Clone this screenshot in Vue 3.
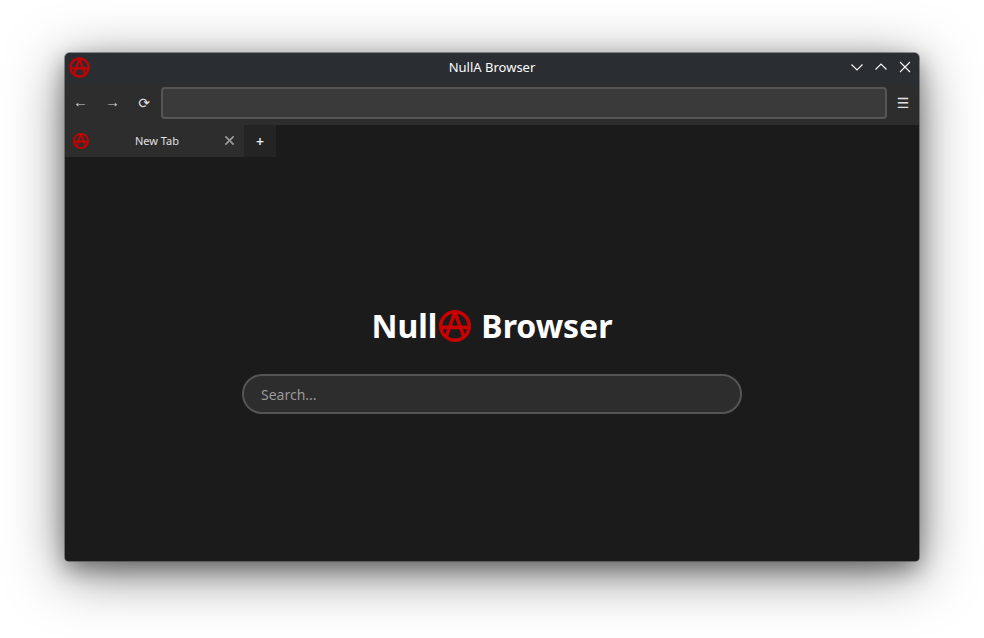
<script setup>
const circle = 'M12 2.5a9.5 9.5 0 1 0 0 19a9.5 9.5 0 0 0 0-19Z';
const letter = 'M12 2.8 5.8 20M12 2.8 18.2 20M2.8 12.9h18.4';
</script>

<template>
  <div class="desktop">
    <div class="window">
      <header class="titlebar">
        <svg class="logo title-logo" viewBox="0 0 24 24" aria-hidden="true">
          <path :d="circle" />
          <path :d="letter" />
        </svg>
        <span class="title">NullA Browser</span>
        <div class="win-controls">
          <svg viewBox="0 0 14 14" aria-hidden="true"><path d="M1.5 4.5 7 10l5.5-5.5" /></svg>
          <svg viewBox="0 0 14 14" aria-hidden="true"><path d="M1.5 9.5 7 4l5.5 5.5" /></svg>
          <svg viewBox="0 0 14 14" aria-hidden="true"><path d="M2 2l10 10M12 2 2 12" /></svg>
        </div>
      </header>

      <div class="toolbar">
        <button class="nav arrow">←</button>
        <button class="nav arrow">→</button>
        <button class="nav reload">⟳</button>
        <div class="address"></div>
        <button class="nav menu">☰</button>
      </div>

      <div class="tabs">
        <div class="tab">
          <svg class="logo tab-logo" viewBox="0 0 24 24" aria-hidden="true">
            <path :d="circle" />
            <path :d="letter" />
          </svg>
          <span class="tab-label">New Tab</span>
          <svg class="tab-close" viewBox="0 0 12 12" aria-hidden="true"><path d="M1.5 1.5l9 9M10.5 1.5l-9 9" /></svg>
        </div>
        <button class="new-tab">+</button>
      </div>

      <main class="content">
        <h1 class="brand">
          <span>Null</span>
          <svg class="logo brand-logo" viewBox="0 0 24 24" aria-hidden="true">
            <path :d="circle" />
            <path :d="letter" />
          </svg>
          <span class="brand-rest">Browser</span>
        </h1>
        <div class="search">Search...</div>
      </main>
    </div>
  </div>
</template>

<style scoped>
.desktop {
  width: 984px;
  height: 638px;
  padding: 53px 65px 77px 65px;
  box-sizing: border-box;
  background: #fff;
  overflow: hidden;
  font-family: "Noto Sans", sans-serif;
}
.window {
  height: 508px;
  display: flex;
  flex-direction: column;
  border-radius: 5px 5px 4px 4px;
  overflow: hidden;
  background: #1b1b1b;
  box-shadow:
    0 0 0 1px rgba(60, 60, 60, 0.5),
    0 8px 22px rgba(0, 0, 0, 0.36),
    0 12px 56px rgba(0, 0, 0, 0.5);
}
.titlebar {
  height: 28px;
  flex: none;
  display: grid;
  grid-template-columns: 1fr auto 1fr;
  align-items: center;
  background: #2a2e32;
}
.logo {
  fill: none;
  stroke: #c80000;
  stroke-width: 2.4;
  display: block;
}
.title-logo {
  width: 23px;
  height: 23px;
  margin-left: 3px;
}
.title {
  font-size: 13px;
  color: #fcfcfc;
}
.win-controls {
  display: flex;
  gap: 10px;
  justify-self: end;
  margin-right: 7px;
}
.win-controls svg {
  width: 14px;
  height: 14px;
  fill: none;
  stroke: #fcfcfc;
  stroke-width: 1.1;
}
.toolbar {
  height: 44px;
  box-sizing: border-box;
  flex: none;
  display: flex;
  align-items: flex-start;
  background: linear-gradient(#2a2e32 0, #2d2d2d 6px);
  padding-top: 6px;
}
.nav {
  width: 32px;
  height: 32px;
  flex: none;
  padding: 0;
  border: 0;
  background: none;
  color: #e0e0e0;
  font-family: "DejaVu Sans", sans-serif;
  font-size: 14px;
}
.arrow {
  color: #cfcfcf;
  font-family: "Liberation Sans", sans-serif;
  font-size: 15px;
  padding-bottom: 3px;
  padding-right: 1px;
}
.reload {
  margin-left: -1px;
  margin-right: 1px;
}
.address {
  flex: 1;
  height: 32px;
  box-sizing: border-box;
  background: #3a3a3a;
  border: 2px solid #555;
  border-radius: 4px;
}
.tabs {
  height: 32px;
  flex: none;
  display: flex;
}
.tab {
  width: 179px;
  display: flex;
  align-items: center;
  background: #2d2d2d;
  padding-bottom: 1px;
  box-sizing: border-box;
}
.tab-logo {
  width: 18px;
  height: 18px;
  margin-left: 7px;
  flex: none;
}
.tab-label {
  flex: 1;
  text-align: center;
  font-size: 11px;
  color: #e0e0e0;
}
.tab-close {
  width: 11px;
  height: 11px;
  margin-right: 9px;
  fill: none;
  stroke: #999;
  stroke-width: 1.9;
  flex: none;
}
.new-tab {
  width: 32px;
  padding: 0;
  border: 0;
  background: #242424;
  color: #eee;
  font-family: "Noto Sans", sans-serif;
  font-size: 14px;
  font-weight: 600;
}
.content {
  flex: 1;
  display: flex;
  flex-direction: column;
  align-items: center;
  background: #1b1b1b;
  padding-top: 146px;
}
.brand {
  margin: 0;
  display: flex;
  align-items: center;
  height: 46px;
  font-size: 32px;
  font-weight: 700;
  color: #fff;
  line-height: 46px;
}
.brand-logo {
  width: 36px;
  height: 36px;
  margin-right: 1px;
}
.brand-rest {
  margin-left: 7px;
}
.search {
  width: 500px;
  height: 40px;
  margin-top: 25px;
  box-sizing: border-box;
  padding-left: 17px;
  display: flex;
  align-items: center;
  background: #2d2d2d;
  border: 2px solid #555;
  border-radius: 20px;
  color: #999;
  font-size: 14px;
}
</style>
